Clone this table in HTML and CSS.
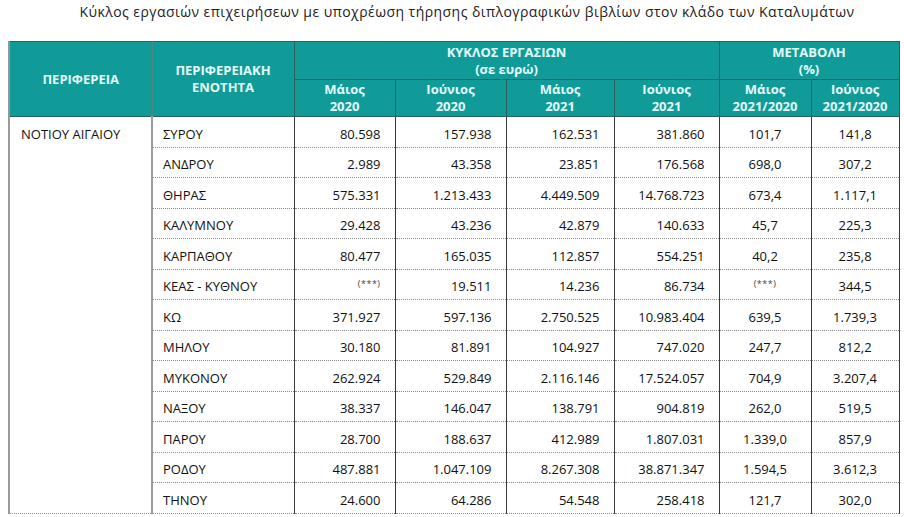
FILE: index.html
```html
<!DOCTYPE html>
<html lang="el">
<head>
<meta charset="utf-8">
<title>Κύκλος εργασιών</title>
<link rel="stylesheet" href="styles.css">
</head>
<body>
<h1 class="title">Κύκλος εργασιών επιχειρήσεων με υποχρέωση τήρησης διπλογραφικών βιβλίων στον κλάδο των Καταλυμάτων</h1>
<table class="tbl">
  <colgroup>
    <col class="c1"><col class="c2"><col class="c3"><col class="c4"><col class="c5"><col class="c6"><col class="c7"><col class="c8">
  </colgroup>
  <thead>
    <tr class="h1">
      <th rowspan="2" class="hfirst">ΠΕΡΙΦΕΡΕΙΑ</th>
      <th rowspan="2" class="hsecond">ΠΕΡΙΦΕΡΕΙΑΚΗ<br>ΕΝΟΤΗΤΑ</th>
      <th colspan="4" class="hgroup">ΚΥΚΛΟΣ ΕΡΓΑΣΙΩΝ<br>(σε ευρώ)</th>
      <th colspan="2" class="hgroup">ΜΕΤΑΒΟΛΗ<br>(%)</th>
    </tr>
    <tr class="h2">
      <th>Μάιος<br>2020</th>
      <th>Ιούνιος<br>2020</th>
      <th>Μάιος<br>2021</th>
      <th>Ιούνιος<br>2021</th>
      <th>Μάιος<br>2021/2020</th>
      <th>Ιούνιος<br>2021/2020</th>
    </tr>
  </thead>
  <tbody>
    <tr><td rowspan="13" class="region">ΝΟΤΙΟΥ ΑΙΓΑΙΟΥ</td><td class="name">ΣΥΡΟΥ</td><td class="num">80.598</td><td class="num">157.938</td><td class="num">162.531</td><td class="num">381.860</td><td class="pct">101,7</td><td class="pct">141,8</td></tr>
    <tr><td class="name">ΑΝΔΡΟΥ</td><td class="num">2.989</td><td class="num">43.358</td><td class="num">23.851</td><td class="num">176.568</td><td class="pct">698,0</td><td class="pct">307,2</td></tr>
    <tr><td class="name">ΘΗΡΑΣ</td><td class="num">575.331</td><td class="num">1.213.433</td><td class="num">4.449.509</td><td class="num">14.768.723</td><td class="pct">673,4</td><td class="pct">1.117,1</td></tr>
    <tr><td class="name">ΚΑΛΥΜΝΟΥ</td><td class="num">29.428</td><td class="num">43.236</td><td class="num">42.879</td><td class="num">140.633</td><td class="pct">45,7</td><td class="pct">225,3</td></tr>
    <tr><td class="name">ΚΑΡΠΑΘΟΥ</td><td class="num">80.477</td><td class="num">165.035</td><td class="num">112.857</td><td class="num">554.251</td><td class="pct">40,2</td><td class="pct">235,8</td></tr>
    <tr><td class="name">ΚΕΑΣ - ΚΥΘΝΟΥ</td><td class="num"><span class="mark">(***)</span></td><td class="num">19.511</td><td class="num">14.236</td><td class="num">86.734</td><td class="pct"><span class="mark">(***)</span></td><td class="pct">344,5</td></tr>
    <tr><td class="name">ΚΩ</td><td class="num">371.927</td><td class="num">597.136</td><td class="num">2.750.525</td><td class="num">10.983.404</td><td class="pct">639,5</td><td class="pct">1.739,3</td></tr>
    <tr><td class="name">ΜΗΛΟΥ</td><td class="num">30.180</td><td class="num">81.891</td><td class="num">104.927</td><td class="num">747.020</td><td class="pct">247,7</td><td class="pct">812,2</td></tr>
    <tr><td class="name">ΜΥΚΟΝΟΥ</td><td class="num">262.924</td><td class="num">529.849</td><td class="num">2.116.146</td><td class="num">17.524.057</td><td class="pct">704,9</td><td class="pct">3.207,4</td></tr>
    <tr><td class="name">ΝΑΞΟΥ</td><td class="num">38.337</td><td class="num">146.047</td><td class="num">138.791</td><td class="num">904.819</td><td class="pct">262,0</td><td class="pct">519,5</td></tr>
    <tr><td class="name">ΠΑΡΟΥ</td><td class="num">28.700</td><td class="num">188.637</td><td class="num">412.989</td><td class="num">1.807.031</td><td class="pct">1.339,0</td><td class="pct">857,9</td></tr>
    <tr><td class="name">ΡΟΔΟΥ</td><td class="num">487.881</td><td class="num">1.047.109</td><td class="num">8.267.308</td><td class="num">38.871.347</td><td class="pct">1.594,5</td><td class="pct">3.612,3</td></tr>
    <tr><td class="name">ΤΗΝΟΥ</td><td class="num">24.600</td><td class="num">64.286</td><td class="num">54.548</td><td class="num">258.418</td><td class="pct">121,7</td><td class="pct">302,0</td></tr>
  </tbody>
</table>
</body>
</html>
```

FILE: styles.css
```css
html, body {
  margin: 0;
  padding: 0;
  background: #ffffff;
}

body {
  font-family: "Open Sans", "Noto Sans", sans-serif;
  color: #111111;
  overflow: hidden;
}

.title {
  margin: 0;
  padding: 3px 0 0 30px;
  height: 41px;
  box-sizing: border-box;
  font-size: 14px;
  font-weight: 400;
  letter-spacing: 0.45px;
  text-align: center;
  color: #222222;
  line-height: 18px;
}

.tbl {
  margin-left: 8px;
  width: 890px;
  table-layout: fixed;
  border-collapse: collapse;
  font-size: 13px;
}

.c1 { width: 143px; }
.c2 { width: 142px; }
.c3 { width: 101px; }
.c4 { width: 111px; }
.c5 { width: 108px; }
.c6 { width: 105px; }
.c7 { width: 92px; }
.c8 { width: 88px; }

.tbl th {
  background: #119b98;
  color: #e4fbfa;
  font-weight: 700;
  font-size: 13px;
  line-height: 17px;
  padding: 0;
  text-align: center;
  vertical-align: middle;
  border: 1px solid #2c5f5d;
}

.tbl thead tr.h1 { height: 38px; }
.tbl thead tr.h2 { height: 37px; }

.tbl th.hfirst {
  border-left: 2px solid #8e9a9a;
  border-right: 1px solid #4f8583;
}

.tbl th.hgroup {
  vertical-align: top;
  padding-top: 2px;
}

.tbl tbody tr { height: 30.5px; }

.tbl td {
  padding: 4px 0 0 0;
  border-left: 1px solid #3a3a3a;
  border-right: 1px solid #3a3a3a;
  border-bottom: 1px dotted #8a8a8a;
  border-top: 1px dotted #8a8a8a;
  font-size: 13px;
  line-height: 18px;
  color: #111111;
  vertical-align: middle;
}

.tbl td.region {
  border-left: 2px solid #9a9a9a;
  border-right: 2px solid #9a9a9a;
  vertical-align: top;
  padding: 8px 0 0 11px;
}

.tbl td.name {
  padding-left: 10px;
  border-left: 2px solid #9a9a9a;
}

.tbl td.num {
  text-align: right;
  padding-right: 14px;
}

.tbl td.pct {
  text-align: center;
}

.mark {
  font-size: 9px;
  color: #444;
  position: relative;
  top: -3px;
  letter-spacing: 0.5px;
}
```
